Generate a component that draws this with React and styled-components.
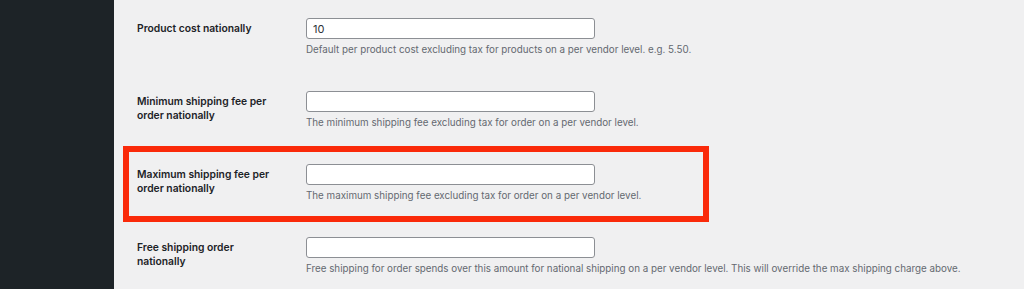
import React from "react";
import styled, { createGlobalStyle } from "styled-components";

const GlobalStyle = createGlobalStyle`
  html, body { margin: 0; padding: 0; background: #f0f0f1; }
  body { font-family: Inter, "Noto Sans", "Liberation Sans", sans-serif; -webkit-font-smoothing: antialiased; }
  *, *::before, *::after { box-sizing: border-box; }
`;

const Page = styled.div`
  display: flex;
  width: 1024px;
  height: 289px;
  overflow: hidden;
  background: #f0f0f1;
`;

const Sidebar = styled.aside`
  flex: 0 0 114px;
  background: #1d2327;
`;

const Main = styled.main`
  flex: 1;
  padding-left: 23px;
`;

const FormTable = styled.div`
  display: flex;
  flex-direction: column;
`;

const Row = styled.div`
  position: relative;
  display: grid;
  grid-template-columns: 169px 1fr;
  height: 73px;
  padding-top: 18px;

  ${(p) =>
    p.$highlighted &&
    `
    &::after {
      content: "";
      position: absolute;
      left: -14px;
      top: 0;
      width: 586px;
      height: 76px;
      border: 6px solid #fa2a0a;
      pointer-events: none;
    }
  `}
`;

const Label = styled.label`
  display: block;
  width: 142px;
  padding-top: 3px;
  font-size: 10.3px;
  line-height: 14px;
  font-weight: 600;
  color: #1d2327;
`;

const Field = styled.div`
  display: flex;
  flex-direction: column;
`;

const Input = styled.input`
  width: 289px;
  height: 21px;
  padding: 0 6px;
  border: 1px solid #8c8f94;
  border-radius: 3px;
  background: #fff;
  font-family: inherit;
  font-size: 11px;
  color: #2c3338;
  outline: none;
`;

const Description = styled.p`
  margin: 4px 0 0;
  font-size: 9.8px;
  line-height: 14px;
  color: #646970;
  white-space: nowrap;
`;

const rows = [
  {
    label: "Product cost nationally",
    value: "10",
    desc: "Default per product cost excluding tax for products on a per vendor level. e.g. 5.50.",
  },
  {
    label: "Minimum shipping fee per order nationally",
    value: "",
    desc: "The minimum shipping fee excluding tax for order on a per vendor level.",
  },
  {
    label: "Maximum shipping fee per order nationally",
    value: "",
    desc: "The maximum shipping fee excluding tax for order on a per vendor level.",
    highlighted: true,
  },
  {
    label: "Free shipping order nationally",
    value: "",
    desc: "Free shipping for order spends over this amount for national shipping on a per vendor level. This will override the max shipping charge above.",
  },
];

export default function App() {
  return (
    <>
      <GlobalStyle />
      <Page>
        <Sidebar />
        <Main>
          <FormTable>
            {rows.map((r, i) => (
              <Row key={i} $highlighted={r.highlighted}>
                <Label>{r.label}</Label>
                <Field>
                  <Input type="text" defaultValue={r.value} />
                  <Description>{r.desc}</Description>
                </Field>
              </Row>
            ))}
          </FormTable>
        </Main>
      </Page>
    </>
  );
}
